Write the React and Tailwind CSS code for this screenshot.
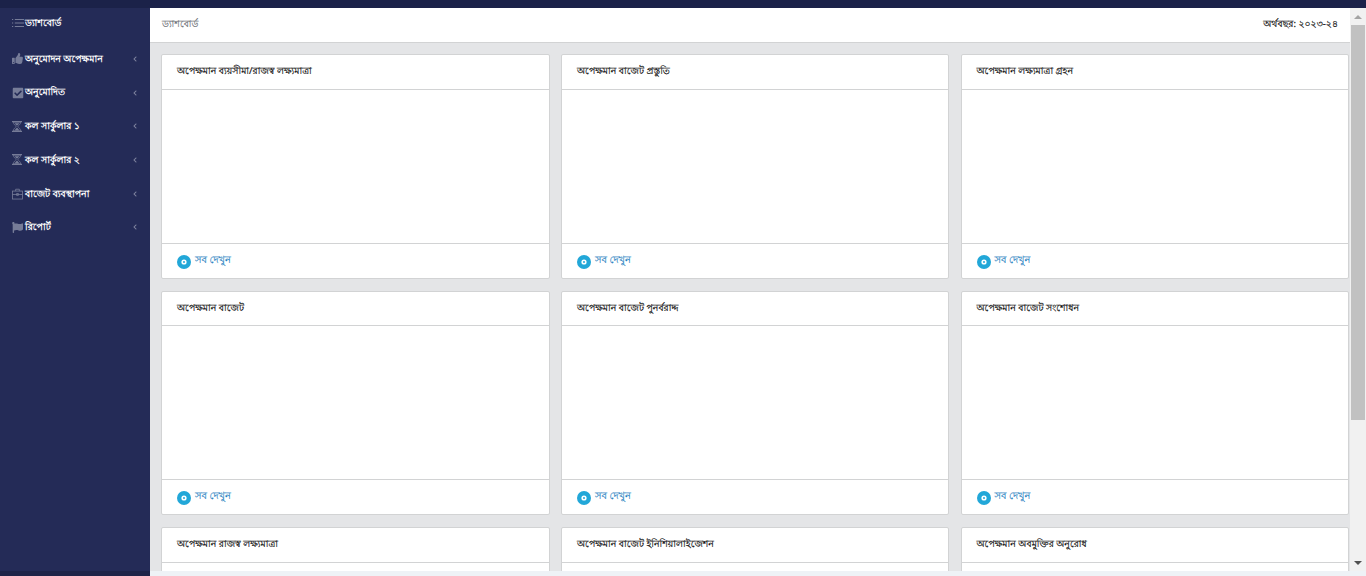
import React from "react";
import { FaThumbsUp, FaCheckSquare, FaFlag, FaChevronLeft } from "react-icons/fa";

const ListIcon = () => (
  <svg width="12" height="10" viewBox="0 0 12 10" fill="none" stroke="currentColor" strokeWidth="1">
    <path d="M0 1.5h1.2M0 5h1.2M0 8.5h1.2M2.8 1.5H12M2.8 5H12M2.8 8.5H12" />
  </svg>
);
const Hourglass = () => (
  <svg width="10" height="13" viewBox="0 0 11 13">
    <path d="M0 0.5h11v1.2H0zM0 11.3h11v1.2H0z" fill="currentColor" />
    <path d="M1.5 1.7h8C9.5 4.5 6.8 5.3 6.5 6.5c.3 1.2 3 2 3 4.8h-8c0-2.8 2.7-3.6 3-4.8C4.2 5.3 1.5 4.5 1.5 1.7z" fill="none" stroke="currentColor" strokeWidth=".8" />
    <path d="M3 3h5C7.5 4.5 6 5 5.500 5.800 5 5 3.500 4.500 3 3zM3 10.800C3.500 9 5 8.500 5.500 7.500 6 8.500 7.500 9 8 10.800z" fill="currentColor" />
  </svg>
);
const Briefcase = () => (
  <svg width="11" height="12" viewBox="0 0 12 12" fill="none" stroke="currentColor" strokeWidth=".9">
    <rect x=".5" y="2.800" width="11" height="8.700" />
    <path d="M4 2.800V.8h4v2M.5 6.500h11M5 5.500h2v2H5z" />
  </svg>
);
const Thumb = () => <FaThumbsUp size={11} />;
const Check = () => <FaCheckSquare size={12} />;
const Flag = () => <FaFlag size={11} />;

const menu = [
  { t: "ড্যাশবোর্ড", I: ListIcon, arrow: false, h: "h-[30px] mb-[4px]" },
  { t: "অনুমোদন অপেক্ষমান", I: Thumb, arrow: true, h: "h-[33.7px]" },
  { t: "অনুমোদিত", I: Check, arrow: true, h: "h-[33.7px]" },
  { t: "কল সার্কুলার ১", I: Hourglass, arrow: true, h: "h-[33.7px]" },
  { t: "কল সার্কুলার ২", I: Hourglass, arrow: true, h: "h-[33.7px]" },
  { t: "বাজেট ব্যবস্থাপনা", I: Briefcase, arrow: true, h: "h-[33.7px]" },
  { t: "রিপোর্ট", I: Flag, arrow: true, h: "h-[33.7px]" },
];

const cards = [
  "অপেক্ষমান ব্যয়সীমা/রাজস্ব লক্ষ্যমাত্রা",
  "অপেক্ষমান বাজেট প্রস্তুতি",
  "অপেক্ষমান লক্ষ্যমাত্রা গ্রহন",
  "অপেক্ষমান বাজেট",
  "অপেক্ষমান বাজেট পুনর্বরাদ্দ",
  "অপেক্ষমান বাজেট সংশোধন",
  "অপেক্ষমান রাজস্ব লক্ষ্যমাত্রা",
  "অপেক্ষমান বাজেট ইনিশিয়ালাইজেশন",
  "অপেক্ষমান অবমুক্তির অনুরোধ",
];

function Card({ title, footer }) {
  return (
    <div className="w-full h-[224.5px] shrink-0 bg-white border border-[#d2d3d4] rounded-[2px] flex flex-col overflow-hidden">
      <div className="h-[34.6px] shrink-0 border-b border-[#d2d3d4] pl-[15px] pt-[8px] text-[9.4px] leading-[16px] text-[#111] [-webkit-text-stroke:0.2px] [text-rendering:geometricPrecision] whitespace-nowrap">{title}</div>
      <div className="flex-1" />
      {footer && (
        <div className="h-[35px] shrink-0 border-t border-[#d2d3d4] pl-[15px] flex items-center gap-[4px] text-[9.8px] text-[#1f7fbf] [-webkit-text-stroke:0.15px] [text-rendering:geometricPrecision]">
          <svg width="14" height="14" viewBox="0 0 14 14" className="mt-[2px]">
            <circle cx="7" cy="7" r="7" fill="#22a7d8" />
            <circle cx="7" cy="7" r="2.6" fill="#fff" />
            <circle cx="7" cy="7" r="1" fill="#22a7d8" />
          </svg>
          <span className="-mt-[1px]">সব দেখুন</span>
        </div>
      )}
    </div>
  );
}

export default function App() {
  return (
    <div className="w-[1366px] h-[576px] overflow-hidden flex flex-col font-['Noto_Sans','Noto_Sans_CJK_SC',sans-serif] bg-[#eef2f6]">
      <div className="h-[8px] shrink-0 bg-[#1b2249]" />
      <div className="flex-1 flex min-h-0">
        <aside className="w-[150px] shrink-0 bg-[#242b57] flex flex-col">
          {menu.map((m, i) => (
            <div key={i} className={`${m.h} shrink-0 flex items-center pl-[12px] pr-[12px] text-white text-[9.4px] font-bold [text-rendering:geometricPrecision]`}>
              <span className="w-[13px] flex justify-start text-[#767c98]"><m.I /></span>
              <span className="flex-1 whitespace-nowrap">{m.t}</span>
              {m.arrow && <FaChevronLeft size={6} className="text-[#7f849f]" />}
            </div>
          ))}
        </aside>
        <main className="flex-1 min-w-0 flex flex-col">
          <div className="flex-1 min-h-0 overflow-hidden flex">
            <div className="w-[1200px] bg-[#e4e5e7] overflow-hidden">
              <div className="h-[35px] bg-white border-b border-[#d2d3d4] flex items-center justify-between pl-[12px] pr-[12px] pb-[2px] text-[9.4px] [text-rendering:geometricPrecision]">
                <span className="text-[#6b6f75] [-webkit-text-stroke:0.15px]">ড্যাশবোর্ড</span>
                <span className="text-[#111] [-webkit-text-stroke:0.2px]">অর্থবছর: ২০২৩-২৪</span>
              </div>
              <div className="grid grid-cols-[388.500px_388px_388px] gap-x-[11.500px] gap-y-[12px] pl-[11px] pt-[11px]">
                {cards.map((c, i) => <Card key={c} title={c} footer={i < 6} />)}
              </div>
            </div>
            <div className="w-[16px] shrink-0 bg-[#f1f1f1] flex flex-col items-center relative">
              <div className="h-[17px] flex items-center justify-center"><div className="w-0 h-0 border-l-[4px] border-r-[4px] border-b-[4px] border-l-transparent border-r-transparent border-b-[#a3a3a3]" /></div>
              <div className="w-[14px] h-[395px] bg-[#c1c1c1]" />
              <div className="flex-1" />
              <div className="h-[17px] flex items-center justify-center"><div className="w-0 h-0 border-l-[4px] border-r-[4px] border-t-[4px] border-l-transparent border-r-transparent border-t-[#505050]" /></div>
            </div>
          </div>
        </main>
      </div>
      <div className="h-[5px] shrink-0 flex">
        <div className="w-[150px] bg-[#1e2448]" />
        <div className="flex-1 bg-[#eef2f6]" />
      </div>
    </div>
  );
}
